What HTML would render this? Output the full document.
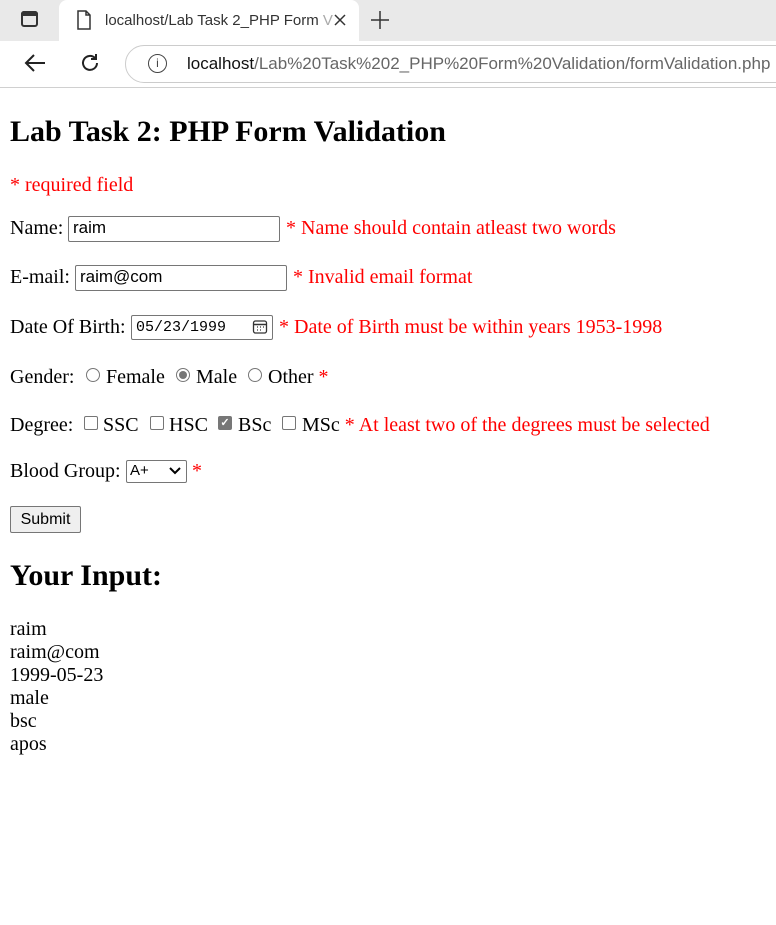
<!DOCTYPE html>
<html><head><meta charset="utf-8"><style>
*{box-sizing:border-box;margin:0;padding:0}
body{width:776px;height:925px;overflow:hidden;background:#fff;font-family:"Liberation Serif",serif;font-size:20px;color:#000;position:relative}
.abs{position:absolute;white-space:nowrap;line-height:23px}
.r{color:#f00}
.inp{display:inline-block;position:absolute;border:1px solid #767676;border-radius:2px;background:#fff;font-family:"Liberation Sans",sans-serif;font-size:17px;line-height:22px;padding-left:4px}
.rad{position:absolute;width:14px;height:14px;border:1px solid #767676;border-radius:50%;background:#fff}
.chk{position:absolute;width:14px;height:14px;border:1px solid #767676;border-radius:2px;background:#fff}
</style></head><body>
<!-- browser chrome -->
<div style="position:absolute;left:0;top:0;width:776px;height:41px;background:#e9e9e9"></div>
<div style="position:absolute;left:21px;top:11px;width:17px;height:16px;border:2px solid #333;border-radius:3px"></div>
<div style="position:absolute;left:21px;top:11px;width:17px;height:5px;background:#333;border-radius:3px 3px 0 0"></div>
<div style="position:absolute;left:59px;top:0;width:300px;height:41px;background:#fff;border-radius:8px 8px 0 0"></div>
<svg style="position:absolute;left:76px;top:10px" width="16" height="20" viewBox="0 0 16 20"><path d="M2 1h8l4 4v14H2z M10 1v4h4" fill="none" stroke="#333" stroke-width="1.5"/></svg>
<div class="abs" style="left:105px;top:9px;font-family:'Liberation Sans',sans-serif;font-size:15px;color:#333">localhost/Lab Task 2_PHP Form <span style="color:#aaa">V</span></div>
<svg style="position:absolute;left:334px;top:14px" width="12" height="12" viewBox="0 0 12 12"><path d="M1 1l10 10M11 1L1 11" stroke="#333" stroke-width="1.5"/></svg>
<svg style="position:absolute;left:371px;top:11px" width="18" height="18" viewBox="0 0 18 18"><path d="M9 0v18M0 9h18" stroke="#333" stroke-width="1.5"/></svg>
<div style="position:absolute;left:0;top:41px;width:776px;height:47px;background:#fff;border-bottom:1px solid #d0d0d0"></div>
<svg style="position:absolute;left:24px;top:53px" width="22" height="20" viewBox="0 0 22 20"><path d="M21 10H2M10 2L2 10l8 8" fill="none" stroke="#222" stroke-width="2"/></svg>
<svg style="position:absolute;left:79px;top:52px" width="22" height="22" viewBox="0 0 22 22"><path d="M18 11a7 7 0 1 1-2-5M17 2v5h-5" fill="none" stroke="#222" stroke-width="2"/></svg>
<div style="position:absolute;left:125px;top:45px;width:680px;height:38px;border:1px solid #ccc;border-radius:19px;background:#fff"></div>
<div style="position:absolute;left:148px;top:54px;width:19px;height:19px;border:1.5px solid #444;border-radius:50%;font:12px 'Liberation Sans',sans-serif;text-align:center;line-height:17px;color:#444">i</div>
<div class="abs" style="left:187px;top:52px;font-family:'Liberation Sans',sans-serif;font-size:17px;color:#111">localhost<span style="color:#666">/Lab%20Task%202_PHP%20Form%20Validation/formValidation.php</span></div>
<!-- page -->
<div class="abs" style="left:10px;top:116px;font-size:30px;font-weight:bold;line-height:32px">Lab Task 2: PHP Form Validation</div>
<div class="abs r" style="left:10px;top:174px">* required field</div>
<div class="abs" style="left:10px;top:217px">Name:</div>
<div class="inp" style="left:68px;top:216px;width:212px;height:26px">raim</div>
<div class="abs r" style="left:286px;top:217px">* Name should contain atleast two words</div>
<div class="abs" style="left:10px;top:266px">E-mail:</div>
<div class="inp" style="left:75px;top:265px;width:212px;height:26px">raim@com</div>
<div class="abs r" style="left:293px;top:266px">* Invalid email format</div>
<div class="abs" style="left:10px;top:316px">Date Of Birth:</div>
<div class="inp" style="left:131px;top:315px;width:142px;height:25px;font-family:'Liberation Mono',monospace;font-size:15px;line-height:23px">05/23/1999</div>
<svg style="position:absolute;left:252px;top:319px" width="16" height="16" viewBox="0 0 16 16"><rect x="1.5" y="2" width="13" height="12" rx="2" fill="none" stroke="#333" stroke-width="1.3"/><path d="M1.5 5.5h13" stroke="#333" stroke-width="1.5"/><path d="M5 8h1M8 8h1M11 8h1M5 11h1M8 11h1" stroke="#333" stroke-width="1.3"/></svg>
<div class="abs r" style="left:279px;top:316px">* Date of Birth must be within years 1953-1998</div>
<!-- gender -->
<div class="abs" style="left:10px;top:366px">Gender:</div>
<span class="rad" style="left:86px;top:368px"></span>
<div class="abs" style="left:106px;top:366px">Female</div>
<span class="rad" style="left:176px;top:368px;border-color:#777"><span style="position:absolute;left:2px;top:2px;width:8px;height:8px;border-radius:50%;background:#777"></span></span>
<div class="abs" style="left:196px;top:366px">Male</div>
<span class="rad" style="left:248px;top:368px"></span>
<div class="abs" style="left:268px;top:366px">Other <span class="r">*</span></div>
<!-- degree -->
<div class="abs" style="left:10px;top:414px">Degree:</div>
<span class="chk" style="left:84px;top:416px"></span>
<div class="abs" style="left:103px;top:414px">SSC</div>
<span class="chk" style="left:150px;top:416px"></span>
<div class="abs" style="left:169px;top:414px">HSC</div>
<span class="chk" style="left:218px;top:416px;background:#777;border-color:#777;color:#fff;font:bold 11px/12px 'Liberation Sans',sans-serif;text-align:center">✓</span>
<div class="abs" style="left:238px;top:414px">BSc</div>
<span class="chk" style="left:282px;top:416px"></span>
<div class="abs" style="left:302px;top:414px">MSc <span class="r">* At least two of the degrees must be selected</span></div>
<div class="abs" style="left:10px;top:460px">Blood Group:</div>
<div class="inp" style="left:126px;top:460px;width:61px;height:23px;font-size:15px;line-height:20px;padding-left:3px">A+</div>
<svg style="position:absolute;left:169px;top:467px" width="12" height="8" viewBox="0 0 12 8"><path d="M1 1l5 5 5-5" fill="none" stroke="#000" stroke-width="2"/></svg>
<div class="abs r" style="left:192px;top:460px">*</div>
<div style="position:absolute;left:10px;top:506px;width:71px;height:27px;border:1px solid #767676;border-radius:2px;background:#efefef;font:16px/25px 'Liberation Sans',sans-serif;text-align:center">Submit</div>
<div class="abs" style="left:10px;top:560px;font-size:30px;font-weight:bold;line-height:32px">Your Input:</div>
<div class="abs" style="left:10px;top:618px">raim<br>raim@com<br>1999-05-23<br>male<br>bsc<br>apos</div>
</body></html>
